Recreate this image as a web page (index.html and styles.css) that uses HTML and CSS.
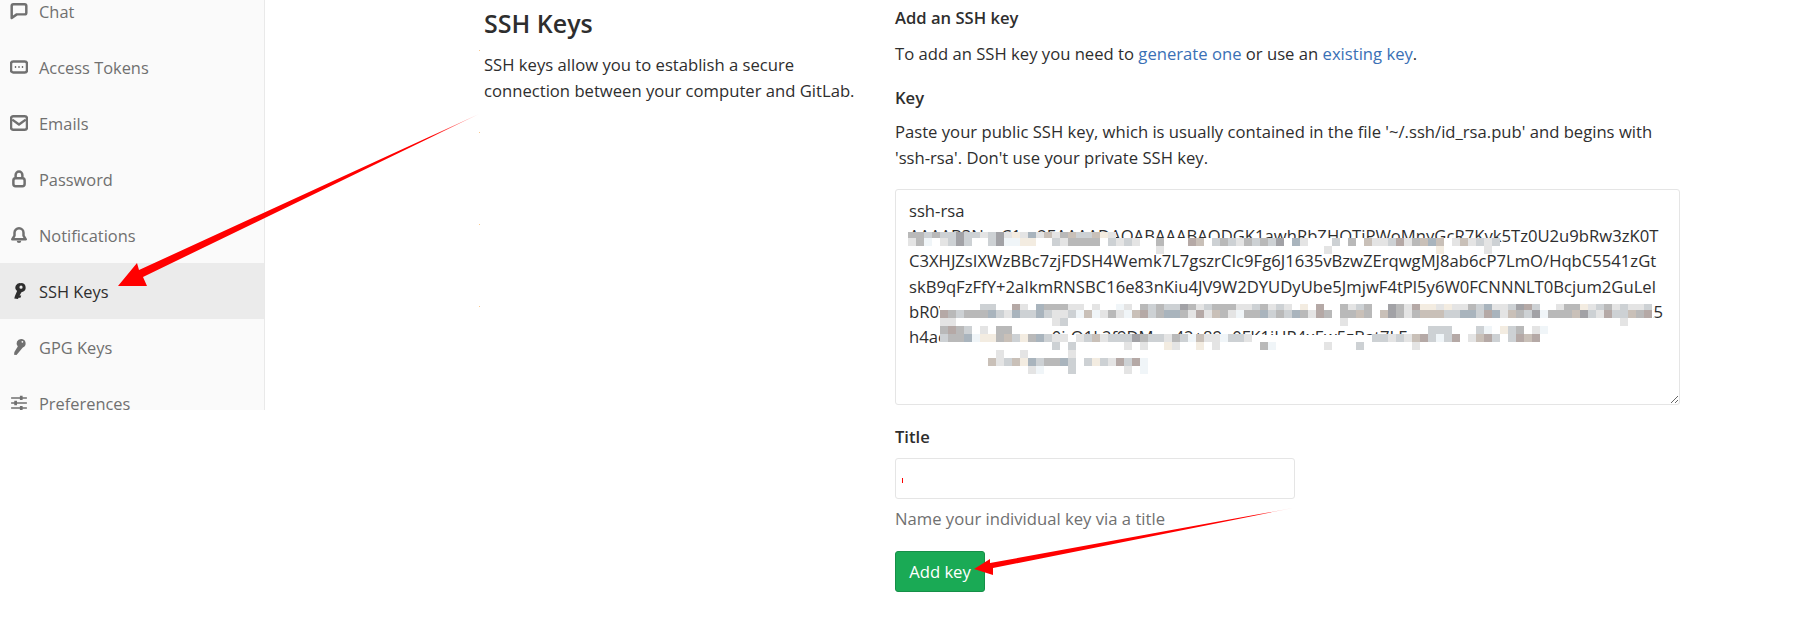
FILE: index.html
```html
<!DOCTYPE html>
<html lang="en">
<head>
<meta charset="utf-8">
<title>SSH Keys</title>
<link rel="stylesheet" href="styles.css">
</head>
<body>
<div class="page">
  <nav class="sidebar">
    <ul class="menu">
      <li class="item"><svg class="ico" viewBox="0 0 16 16"><path class="ol" d="M1.5 3.5a1.5 1.5 0 0 1 1.5-1.5h10a1.5 1.5 0 0 1 1.5 1.5v6a1.5 1.5 0 0 1-1.5 1.5H6l-4.5 3.2z"/></svg><span>Chat</span></li>
      <li class="item"><svg class="ico" viewBox="0 0 16 16"><rect class="ol" x="0.9" y="3.2" width="14.2" height="9.6" rx="2"/><path class="dots" d="M4.3 8h1.2M7.4 8h1.2M10.5 8h1.2"/></svg><span>Access Tokens</span></li>
      <li class="item"><svg class="ico" viewBox="0 0 16 16"><rect class="ol" x="0.9" y="2" width="14.2" height="12" rx="2"/><path class="ol" d="M2 5l6 4.4L14 5"/></svg><span>Emails</span></li>
      <li class="item"><svg class="ico" viewBox="0 0 16 16"><rect class="ol" x="3" y="7.4" width="10" height="7" rx="2"/><path class="ol" d="M5 7.4V4.4a3 3 0 0 1 6 0v3"/></svg><span>Password</span></li>
      <li class="item"><svg class="ico" viewBox="0 0 16 16"><path class="ol" d="M8 2a4 4 0 0 1 4 4v2.5l2 3.3H2l2-3.3V6a4 4 0 0 1 4-4z"/><path class="solid" d="M6 13h4a2 2 0 0 1-4 0z"/></svg><span>Notifications</span></li>
      <li class="item active"><svg class="ico" viewBox="0 0 16 16"><path class="solid" fill-rule="evenodd" d="M9.8 1a4 4 0 0 1 1 7.9l-.6.1L8.5 12H10l-.7 2H7.6l-.5 1.2-3.3-.6.6-2.2L6.3 8A4 4 0 0 1 9.8 1zm0 2.2a1.4 1.4 0 1 0 0 2.8 1.4 1.4 0 0 0 0-2.8z"/></svg><span>SSH Keys</span></li>
      <li class="item"><svg class="ico" viewBox="0 0 16 16"><path class="solid" fill-rule="evenodd" d="M10 .8a4 4 0 0 1 1.4 7.7L5.8 15.2 3.6 14.9l.3-2.4 3-5A4 4 0 0 1 10 .8zm1 1.8a.8.8 0 1 0 0 1.6.8.8 0 0 0 0-1.6z"/></svg><span>GPG Keys</span></li>
      <li class="item"><svg class="ico" viewBox="0 0 16 16"><path class="bars" d="M1 3.5h14M1 8h14M1 12.5h14"/><path class="knobs" d="M10 1.6v3.8M5 6.1v3.8M10 10.6v3.8"/></svg><span>Preferences</span></li>
    </ul>
  </nav>
  <main class="content">
    <section class="intro">
      <h3 class="intro-title">SSH Keys</h3>
      <p class="intro-text">SSH keys allow you to establish a secure<br>connection between your computer and GitLab.</p>
    </section>
    <form class="form">
      <h5 class="label">Add an SSH key</h5>
      <p class="para">To add an SSH key you need to <a class="link" href="#">generate one</a> or use an <a class="link" href="#">existing key</a>.</p>
      <h5 class="label label-key">Key</h5>
      <p class="para para-key">Paste your public SSH key, which is usually contained in the file '~/.ssh/id_rsa.pub' and begins with<br>'ssh-rsa'. Don't use your private SSH key.</p>
      <textarea class="keybox" wrap="off" spellcheck="false">ssh-rsa
AAAAB3NzaC1yc2EAAAADAQABAAABAQDGK1awhRbZHQTiPWoMnyGcR7Kvk5Tz0U2u9bRw3zK0T
C3XHJZsIXWzBBc7zjFDSH4Wemk7L7gszrCIc9Fg6J1635vBzwZErqwgMJ8ab6cP7LmO/HqbC5541zGt
skB9qFzFfY+2aIkmRNSBC16e83nKiu4JV9W2DYUDyUbe5JmjwF4tPl5y6W0FCNNNLT0Bcjum2GuLel
bR0VFX9hWWxxxxxxxxxxxxxxxxxxxxxxxxxxxxxxxxxxxxxxxxxxxxxxxxxxxxxxxxxxxxxxxxxxxxxxxxx5
h4acVxxxxxxxxxxx0j-Q1L2f9DMcw42+89q0FK1iHP4xEw5zBat7LFxxxxxxxxxxxxx</textarea>
      <label class="label label-title" for="title">Title</label>
      <input class="titlebox" id="title" type="text">
      <p class="hint">Name your individual key via a title</p>
      <button class="btn" type="button">Add key</button>
    </form>
  </main>
</div>
<svg class="overlay" viewBox="0 0 1797 617" aria-hidden="true">
  <defs>
    <linearGradient id="fade1" gradientUnits="userSpaceOnUse" x1="479" y1="114" x2="430" y2="137"><stop offset="0" stop-color="#f00" stop-opacity=".3"/><stop offset="1" stop-color="#f00"/></linearGradient>
    <linearGradient id="fade2" gradientUnits="userSpaceOnUse" x1="1293" y1="508" x2="1255" y2="515"><stop offset="0" stop-color="#f00" stop-opacity=".2"/><stop offset="1" stop-color="#f00"/></linearGradient>
  </defs>
  <g class="mask">
    <path d="M908 232h199v6h393v16H908zM940 304h713v22H940zM940 326h90v9h390l0-7h120v22H940z"/>
  </g>
  <g class="mo">
    <g class="thin"><path class="ma" d="M908 235h16M932 235h8M1060 235h8"/><path class="mb" d="M956 235h8M996 235h8"/><path class="mc" d="M924 235h8M940 235h16M964 235h16M988 235h8M1076 235h16"/><path class="md" d="M1044 235h8M1068 235h8M1092 235h8"/><path class="me" d="M980 235h8M1004 235h8M1020 235h8M1036 235h8M1052 235h8M1108 235h8"/><path class="mg" d="M1028 235h8"/><path class="mi" d="M1012 235h8M1100 235h8"/></g>
    <path class="ma" d="M916 242h8M1068 242h32M1156 242h8M1220 242h8M1244 242h8M1260 242h8M1348 242h8M1412 242h8"/><path class="mb" d="M956 242h8M996 242h8M1276 242h8"/><path class="mc" d="M948 242h8M964 242h8M988 242h8M1052 242h8M1108 242h8M1124 242h8M1212 242h8M1228 242h8M1252 242h8M1268 242h8M1332 242h8M1388 242h8M1476 242h8M1492 242h8"/><path class="md" d="M1196 242h8M1364 242h8M1420 242h8M1436 242h8M1460 242h8"/><path class="me" d="M908 242h8M940 242h8M1060 242h8M1116 242h8M1132 242h8M1236 242h8M1300 242h8M1372 242h16M1404 242h8M1452 242h8M1468 242h8M1484 242h8"/><path class="mf" d="M924 242h8M1004 242h16"/><path class="mg" d="M1292 242h8M1428 242h8"/><path class="mh" d="M1188 242h8M1396 242h8"/><path class="mi" d="M1020 242h16"/>
    <path class="me" d="M1156 250h8M1324 250h8M1484 250h8"/><path class="mi" d="M1436 250h8"/>
    <g class="thin">
      <path class="ma" d="M1044 307h24M1140 307h8M1156 307h8M1188 307h8M1212 307h24M1260 307h8M1340 307h8M1364 307h8M1396 307h8M1468 307h8M1564 307h16M1604 307h8"/><path class="mb" d="M1180 307h8M1388 307h8M1516 307h8"/><path class="mc" d="M980 307h16M1148 307h8M1164 307h16M1204 307h8M1252 307h8M1276 307h8M1356 307h8M1476 307h8M1508 307h8M1532 307h8M1596 307h8M1620 307h8M1644 307h8"/><path class="me" d="M1020 307h8M1068 307h16M1092 307h8M1124 307h8M1196 307h8M1236 307h16M1268 307h8M1284 307h8M1348 307h8M1404 307h8M1436 307h8M1452 307h16M1492 307h16M1556 307h8M1588 307h8M1612 307h8M1628 307h16"/><path class="mf" d="M1116 307h8"/><path class="mg" d="M1036 307h8M1484 307h8"/><path class="mh" d="M1012 307h8M1316 307h8M1412 307h8M1524 307h8"/><path class="mi" d="M1300 307h8M1420 307h16M1444 307h8M1580 307h8"/>
    </g>
    <path class="ma" d="M948 314h8M964 314h24M1108 314h8M1156 314h8M1180 314h8M1220 314h8M1244 314h16M1276 314h8M1300 314h8M1324 314h8M1340 314h16M1364 314h8M1396 314h8M1412 314h8M1516 314h8M1548 314h24M1636 314h8"/><path class="mb" d="M1388 314h8M1532 314h8M1580 314h8"/><path class="mc" d="M956 314h8M996 314h8M1020 314h16M1044 314h8M1068 314h8M1148 314h8M1268 314h8M1284 314h8M1444 314h16M1476 314h8M1524 314h8M1588 314h8M1612 314h16"/><path class="md" d="M1084 314h8M1132 314h8M1212 314h8M1356 314h8M1380 314h8M1420 314h24M1508 314h8M1572 314h8M1628 314h8"/><path class="me" d="M1004 314h8M1052 314h16M1100 314h8M1116 314h8M1188 314h8M1204 314h8M1228 314h8M1308 314h8M1404 314h8M1500 314h8M1596 314h8"/><path class="mf" d="M1076 314h8M1092 314h8M1124 314h8M1236 314h8M1540 314h8"/><path class="mg" d="M988 314h8M1012 314h8M1036 314h8M1164 314h16M1260 314h8M1292 314h8M1460 314h16M1492 314h8"/><path class="mh" d="M940 314h8M1140 314h8M1196 314h8M1316 314h8M1484 314h8M1604 314h8M1644 314h8"/>
    <path class="me" d="M940 322h16M1052 322h8M1340 322h8M1620 322h8"/><path class="mc" d="M1060 322h8"/>
    <path class="ma" d="M940 330h8M956 330h8M996 330h16M1516 330h8"/><path class="mh" d="M948 330h8"/><path class="mc" d="M964 330h8M1428 330h24M1476 330h8M1508 330h8"/><path class="me" d="M980 330h8M1532 330h8"/><path class="mf" d="M1484 330h8M1540 330h8"/><path class="mi" d="M1500 330h8"/>
    <path class="ma" d="M948 338h16M996 338h8M1028 338h8M1140 338h8M1172 338h8"/><path class="mb" d="M1132 338h8"/><path class="mc" d="M940 338h8M1012 338h8M1044 338h8M1084 338h8M1108 338h24M1148 338h16M1180 338h8M1228 338h16M1372 338h16M1396 338h8M1428 338h8M1444 338h8M1492 338h8M1508 338h8"/><path class="md" d="M1004 338h8M1092 338h8M1196 338h8M1412 338h8M1476 338h8M1524 338h8"/><path class="me" d="M1052 338h16M1076 338h8M1100 338h8M1164 338h8M1204 338h16M1244 338h8M1388 338h8M1404 338h8M1468 338h8"/><path class="mf" d="M972 338h8M1188 338h8M1220 338h8M1436 338h8"/><path class="mg" d="M964 338h8M1036 338h8"/><path class="mh" d="M1420 338h8M1452 338h8M1484 338h8M1516 338h8M1532 338h8"/><path class="mi" d="M980 338h16M1020 338h8"/>
    <path class="ma" d="M1260 346h8"/><path class="mc" d="M1052 346h8M1068 346h8M1356 346h8"/><path class="me" d="M1124 346h8M1140 346h8M1172 346h8M1212 346h8M1324 346h8M1412 346h8"/><path class="mf" d="M1268 346h8"/><path class="mi" d="M1164 346h8M1196 346h8"/>
    <path class="me" d="M996 354h8M1020 354h8M1068 354h8"/>
    <path class="ma" d="M1044 362h16"/><path class="mc" d="M1004 362h8M1036 362h8M1068 362h8M1084 362h8M1100 362h8M1124 362h8"/><path class="md" d="M988 362h8M1012 362h8"/><path class="me" d="M996 362h8M1108 362h8"/><path class="mf" d="M1140 362h8"/><path class="mg" d="M1028 362h8M1060 362h8"/><path class="mh" d="M1116 362h8M1132 362h8"/><path class="mi" d="M1020 362h8M1092 362h8"/>
    <path class="mc" d="M1068 370h8"/><path class="me" d="M1028 370h8M1124 370h8"/><path class="mf" d="M1036 370h8M1140 370h8"/>
  </g>
  <path class="red" d="M902 478h1v5h-1z"/>
  <path class="specks" d="M479 50h1v1h-1zM479 132h1v1h-1zM479 224h1v1h-1zM479 306h1v1h-1z"/>
  <polygon fill="url(#fade1)" points="479,114 143,277 147,286 118,286 137,263 139,270"/>
  <polygon fill="url(#fade2)" points="1293,508 990,563 990,559 974,569 993,575 993,568"/>
</svg>
</body>
</html>
```
FILE: styles.css
```css
* { box-sizing: border-box; }
html, body { margin: 0; padding: 0; background: #fff; }
body {
  position: relative;
  width: 1797px;
  height: 617px;
  overflow: hidden;
  font-family: "Open Sans", "Noto Sans", sans-serif;
  font-size: 16.65px;
  line-height: 26px;
  color: #2e2e2e;
}
.page { display: flex; align-items: flex-start; }

.sidebar {
  flex: none;
  width: 265px;
  height: 410px;
  overflow: hidden;
  background: #fafafa;
  border-right: 1px solid #e9e9e9;
  font-size: 16.4px;
}
.menu { list-style: none; margin: -17px 0 0; padding: 0; }
.item {
  display: flex;
  align-items: center;
  gap: 11px;
  height: 56px;
  padding-left: 10px;
  color: #707070;
}
.item span { padding-top: 2px; }
.item.active { background: #ebebeb; color: #2e2e2e; }
.ico { flex: none; width: 18px; height: 18px; }
.ol { fill: none; stroke: #707070; stroke-width: 2.2; stroke-linejoin: round; }
.solid { fill: #707070; }
.dots { fill: none; stroke: #707070; stroke-width: 1.7; stroke-dasharray: 1.2 1.9; }
.bars { fill: none; stroke: #707070; stroke-width: 1.3; }
.knobs { fill: none; stroke: #707070; stroke-width: 2.4; }
.active .solid { fill: #2e2e2e; }

.content { flex: none; display: flex; padding-left: 219px; }
.intro { flex: none; width: 411px; }
.intro-title { margin: 6px 0 0; font-size: 25px; line-height: 34px; font-weight: 600; }
.intro-text { margin: 12px 0 0; }

.form { flex: none; width: 785px; display: flex; flex-direction: column; align-items: flex-start; padding-top: 5px; }
.label { display: block; margin: 0; font-size: 16.6px; line-height: 26px; font-weight: 600; }
.para { margin: 10px 0 0; }
.label-key { margin-top: 18px; }
.para-key { margin-top: 8px; }
.label-title { margin-top: 19px; }
.link { color: #3a70b5; text-decoration: none; }

.keybox {
  display: block;
  width: 785px;
  height: 216px;
  margin-top: 18px;
  padding: 8px 13px;
  border: 1px solid #e5e5e5;
  border-radius: 3px;
  font: inherit;
  line-height: 25.2px;
  color: #2e2e2e;
  white-space: pre;
  overflow: hidden;
  resize: both;
  outline: none;
}
.titlebox {
  display: block;
  width: 400px;
  height: 41px;
  margin-top: 8px;
  border: 1px solid #e5e5e5;
  border-radius: 3px;
  outline: none;
}
.hint { margin: 7px 0 0; color: #707070; }
.btn {
  width: 90px;
  height: 41px;
  margin-top: 19px;
  padding: 0;
  border: 1px solid #168f48;
  border-radius: 3px;
  background: #1aaa55;
  color: #fff;
  font: inherit;
}

.overlay { position: absolute; left: 0; top: 0; width: 1797px; height: 617px; pointer-events: none; }
.mask path { fill: #fff; }
.mo path { fill: none; stroke-width: 8; }
.mo .thin path { stroke-width: 6; }
.ma { stroke: #b9b9b9; }
.mb { stroke: #a2a2a6; }
.mc { stroke: #cdd1d4; }
.md { stroke: #c9c0b8; }
.me { stroke: #e4e4e4; }
.mf { stroke: #f0f5f8; }
.mg { stroke: #a9b4bd; }
.mh { stroke: #b5a9a6; }
.mi { stroke: #f3ece1; }
.red { fill: #f00; }
.specks { fill: #fbc98e; }
```
